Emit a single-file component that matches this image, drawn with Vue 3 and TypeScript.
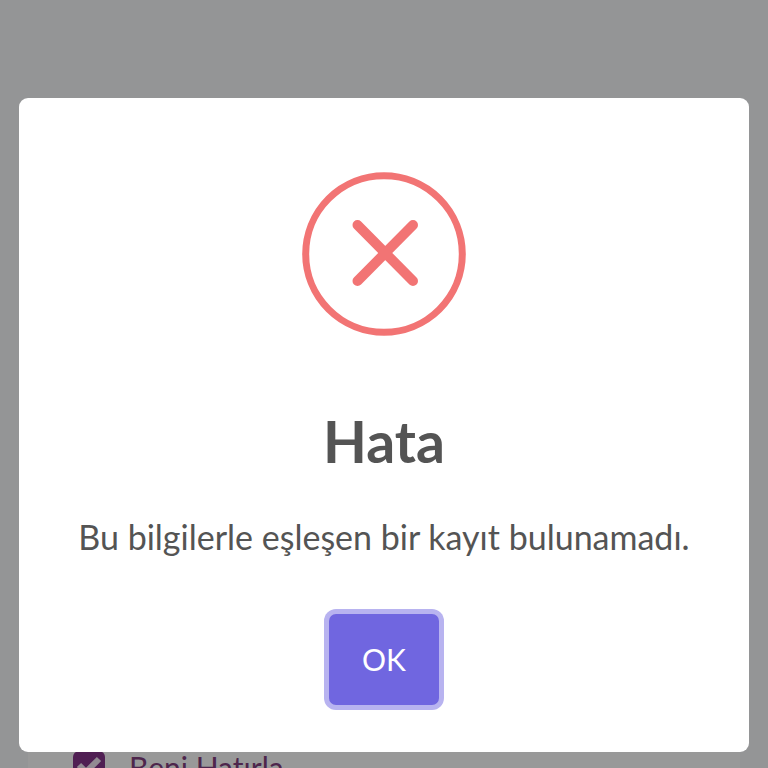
<script setup lang="ts">
import { ref } from 'vue'

const open = ref(true)
const remember = ref(true)

function close(): void {
  open.value = false
}
</script>

<template>
  <main class="page">
    <form class="card" @submit.prevent>
      <label class="remember">
        <input v-model="remember" class="remember-input" type="checkbox" />
        <span class="remember-box">
          <svg v-if="remember" viewBox="0 0 32 32" aria-hidden="true">
            <path d="M6 14L13 21L26 8" />
          </svg>
        </span>
        <span>Beni Hatırla</span>
      </label>
    </form>
  </main>

  <div v-if="open" class="backdrop">
    <section class="dialog" role="alertdialog" aria-modal="true" aria-labelledby="title" aria-describedby="message">
      <svg class="icon" viewBox="0 0 164 164" aria-hidden="true">
        <circle cx="82" cy="82" r="78.3" />
        <path d="M55.5 53L111 109M111 53L55.5 109" />
      </svg>
      <h2 id="title" class="title">Hata</h2>
      <p id="message" class="message">Bu bilgilerle eşleşen bir kayıt bulunamadı.</p>
      <button class="confirm" type="button" @click="close">OK</button>
    </section>
  </div>
</template>

<style>
body {
  background: #f7f8fb;
}
</style>

<style scoped>
.page,
.backdrop {
  box-sizing: border-box;
  font-family: Lato, "Open Sans", sans-serif;
  font-variant-ligatures: none;
}

.page {
  height: 100vh;
  overflow: hidden;
  display: flex;
  flex-direction: column;
  padding: 120px 28px 0;
}

.card {
  flex: 1;
  display: flex;
  flex-direction: column;
  background: #ffffff;
}

.remember {
  display: flex;
  align-items: center;
  gap: 24px;
  margin-top: 627px;
  padding-left: 45px;
  font-size: 30px;
  line-height: 40px;
  color: #82407f;
}

.remember-input {
  position: absolute;
  opacity: 0;
}

.remember-box {
  width: 32px;
  height: 32px;
  border-radius: 6px;
  background: #85358a;
}

.remember-box svg {
  display: block;
  fill: none;
  stroke: #f4e6f4;
  stroke-width: 6;
}

.backdrop {
  position: fixed;
  inset: 0;
  display: flex;
  align-items: flex-start;
  justify-content: center;
  padding: 98px 19px 0;
  background: rgba(0, 0, 0, 0.4);
}

.dialog {
  flex: 1;
  box-sizing: border-box;
  display: flex;
  flex-direction: column;
  align-items: center;
  padding: 74px 24px 47px;
  border-radius: 9px;
  background: #ffffff;
  color: #545454;
}

.icon {
  width: 164px;
  height: 164px;
  fill: none;
  stroke: #f27474;
  stroke-width: 7;
}

.icon path {
  stroke-width: 10;
  stroke-linecap: round;
}

.title {
  margin: 70px 0 0;
  font-size: 57px;
  font-weight: 700;
  line-height: 70px;
}

.message {
  margin: 39px 0 0;
  font-size: 34px;
  line-height: 44px;
  text-align: center;
}

.confirm {
  margin-top: 55px;
  padding: 24px 33px;
  border: 0;
  border-radius: 7px;
  background: #7066e0;
  box-shadow: 0 0 0 5px #b8b3f0;
  color: #ffffff;
  font-family: inherit;
  font-size: 30px;
  line-height: 43px;
}
</style>
